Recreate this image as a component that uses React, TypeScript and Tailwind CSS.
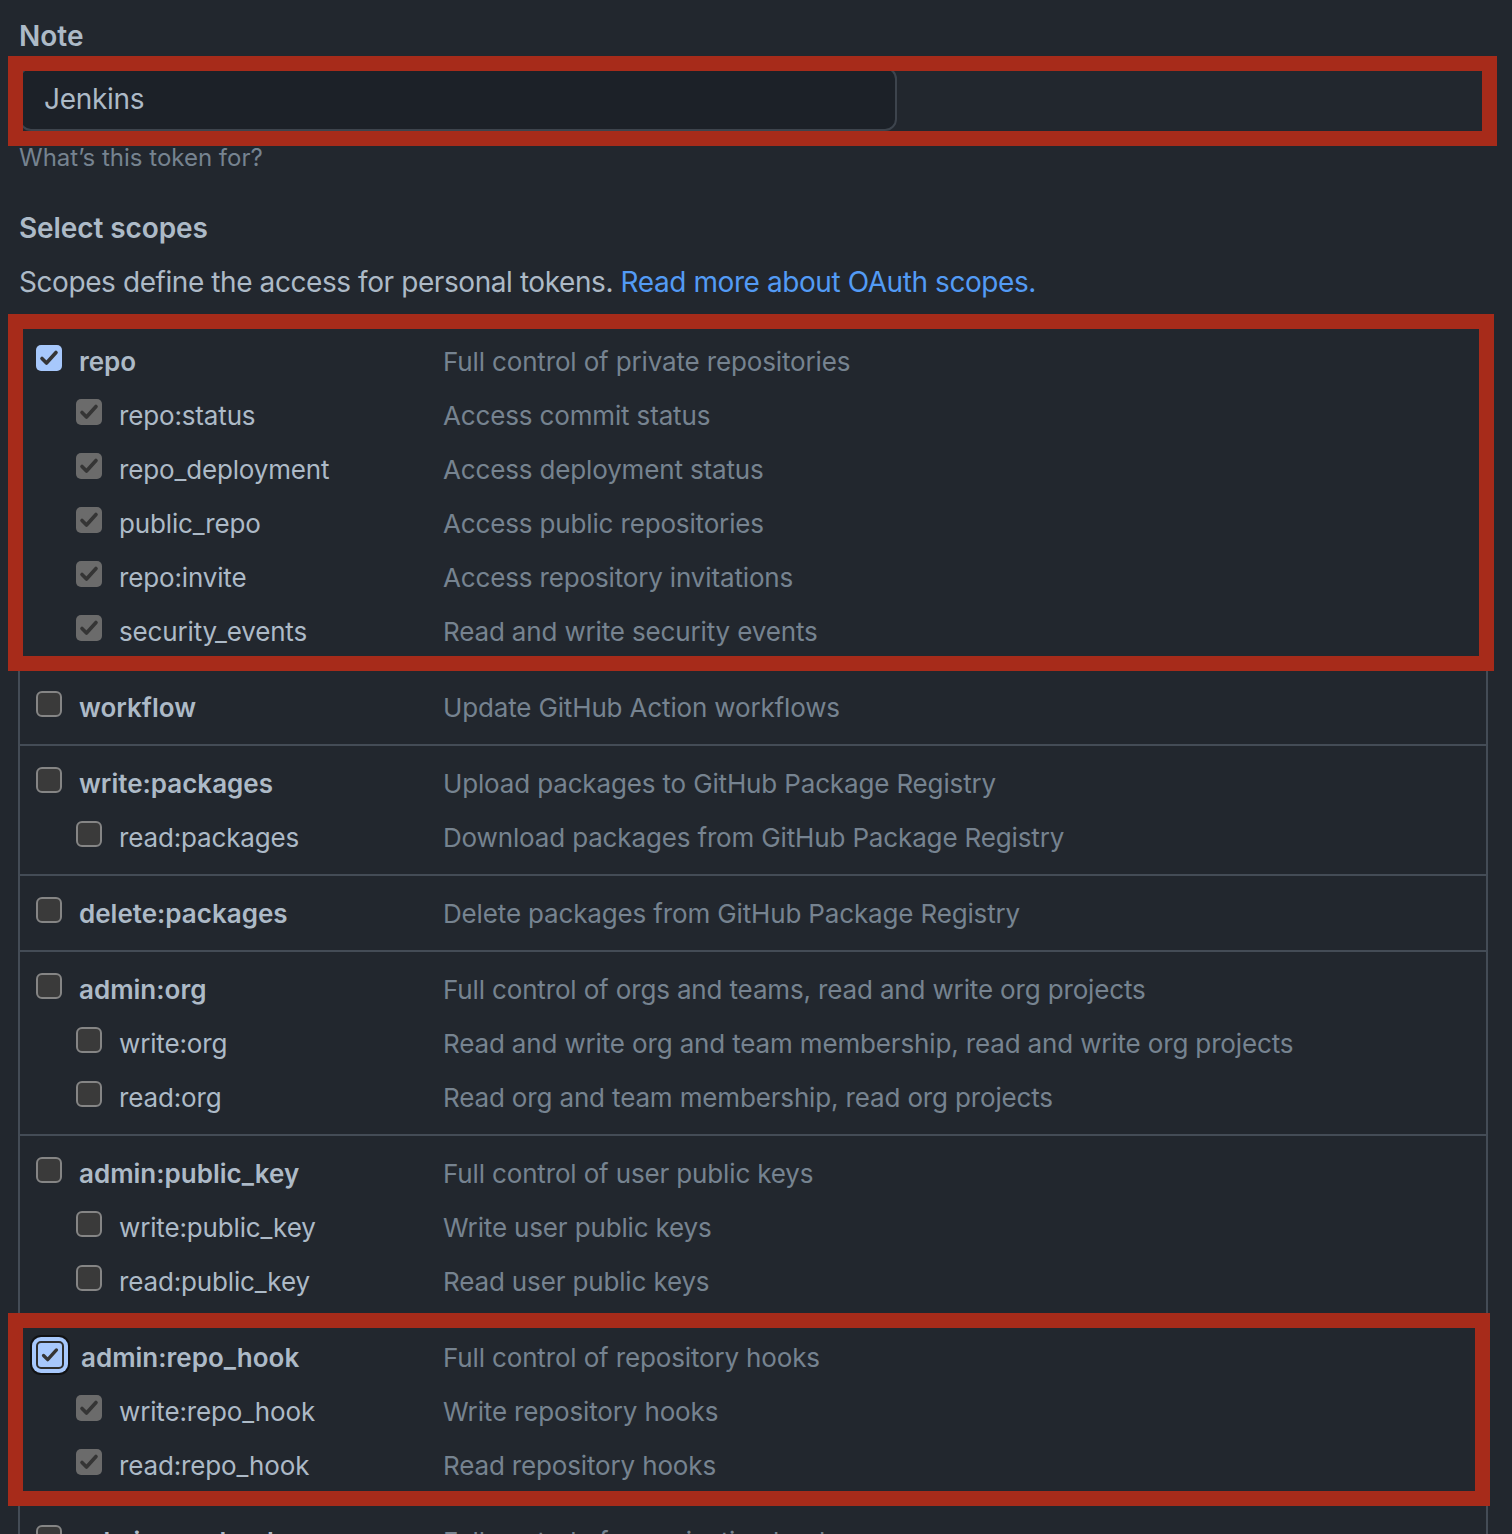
import React from "react";

type Sub = { name: string; desc: string };
type Group = { name: string; desc: string; checked?: boolean; focus?: boolean; subs?: Sub[] };

const groups: Group[] = [
  {
    name: "repo",
    desc: "Full control of private repositories",
    checked: true,
    subs: [
      { name: "repo:status", desc: "Access commit status" },
      { name: "repo_deployment", desc: "Access deployment status" },
      { name: "public_repo", desc: "Access public repositories" },
      { name: "repo:invite", desc: "Access repository invitations" },
      { name: "security_events", desc: "Read and write security events" },
    ],
  },
  { name: "workflow", desc: "Update GitHub Action workflows" },
  {
    name: "write:packages",
    desc: "Upload packages to GitHub Package Registry",
    subs: [{ name: "read:packages", desc: "Download packages from GitHub Package Registry" }],
  },
  { name: "delete:packages", desc: "Delete packages from GitHub Package Registry" },
  {
    name: "admin:org",
    desc: "Full control of orgs and teams, read and write org projects",
    subs: [
      { name: "write:org", desc: "Read and write org and team membership, read and write org projects" },
      { name: "read:org", desc: "Read org and team membership, read org projects" },
    ],
  },
  {
    name: "admin:public_key",
    desc: "Full control of user public keys",
    subs: [
      { name: "write:public_key", desc: "Write user public keys" },
      { name: "read:public_key", desc: "Read user public keys" },
    ],
  },
  {
    name: "admin:repo_hook",
    desc: "Full control of repository hooks",
    checked: true,
    focus: true,
    subs: [
      { name: "write:repo_hook", desc: "Write repository hooks" },
      { name: "read:repo_hook", desc: "Read repository hooks" },
    ],
  },
  { name: "admin:org_hook", desc: "Full control of organization hooks" },
];

function Check() {
  return (
    <svg width="26" height="26" viewBox="0 0 26 26" className="block">
      <path d="M6 13.5 L10.5 18 L20 7.5" fill="none" stroke="#353535" strokeWidth="3.6" strokeLinecap="round" strokeLinejoin="round" />
    </svg>
  );
}

function Box({ kind, focus }: { kind: "on" | "dis" | "off"; focus?: boolean }) {
  if (kind === "on" && focus) {
    return (
      <span className="-mt-[5px] flex h-[28px] w-[28px] shrink-0 items-center justify-center rounded-[5px] border-2 border-[#2e2e2e] bg-[#a7c8fc] shadow-[0_0_0_4px_#a7c8fc,0_0_0_6px_#111214]">
        <Check />
      </span>
    );
  }
  if (kind === "on") {
    return (
      <span className="-mt-[6px] flex h-[26px] w-[26px] shrink-0 items-center justify-center rounded-[5px] bg-[#a7c8fc]">
        <Check />
      </span>
    );
  }
  if (kind === "dis") {
    return (
      <span className="-mt-[6px] flex h-[26px] w-[26px] shrink-0 items-center justify-center rounded-[5px] bg-[#6b6b6b]">
        <Check />
      </span>
    );
  }
  return <span className="-mt-[6px] block h-[26px] w-[26px] shrink-0 rounded-[6px] border-2 border-[#858585] bg-[#3a3a3a]" />;
}

export default function App() {
  return (
    <div
      className="relative h-[1534px] overflow-hidden bg-[#22272e] text-[#adbac7]"
      style={{ fontFamily: "Inter, 'Noto Sans', sans-serif" }}
    >
      <div className="pl-[19px] pr-[24px] pt-[16px]">
        <div className="text-[28px] font-semibold leading-[40px]">Note</div>
        <div className="mt-[11px] flex h-[64px] w-[878px] items-center rounded-[12px] border-2 border-[#3d444d] bg-[#1c2128] px-[23px] text-[28px] tracking-[-0.3px]">
          Jenkins
        </div>
        <div className="mt-[9px] text-[24px] leading-[36px] text-[#768390]">What’s this token for?</div>
        <div className="mt-[32px] text-[28px] font-semibold leading-[40px] tracking-[-0.1px]">Select scopes</div>
        <div className="mt-[14px] text-[28px] leading-[40px] tracking-[-0.42px]">
          Scopes define the access for personal tokens.{" "}
          <span className="text-[#539bf5]">Read more about OAuth scopes.</span>
        </div>

        <div className="mt-[20px] w-[1470px] -ml-[1px] border-x-2 border-[#444c56]">
          {groups.map((g) => (
            <div key={g.name} className="border-t-2 border-[#444c56] py-[10px]">
              <div className="flex h-[54px] items-center pl-[16px] text-[26px] tracking-[-0.15px]">
                <div className="flex w-[407px] items-center gap-[17px]">
                  <Box kind={g.checked ? "on" : "off"} focus={g.focus} />
                  <span className="font-semibold tracking-[0px]">{g.name}</span>
                </div>
                <span className="text-[#768390]">{g.desc}</span>
              </div>
              {(g.subs || []).map((s) => (
                <div key={s.name} className="flex h-[54px] items-center pl-[56px] text-[26px] tracking-[-0.15px]">
                  <div className="flex w-[367px] items-center gap-[17px]">
                    <Box kind={g.checked ? "dis" : "off"} />
                    <span>{s.name}</span>
                  </div>
                  <span className="text-[#768390]">{s.desc}</span>
                </div>
              ))}
            </div>
          ))}
        </div>
      </div>

      {/* annotation overlays */}
      <div className="pointer-events-none absolute left-[8px] top-[56px] h-[90px] w-[1489px] border-[15px] border-[#a72b1a]" />
      <div className="pointer-events-none absolute left-[8px] top-[314px] h-[357px] w-[1486px] border-[15px] border-[#a72b1a]" />
      <div className="pointer-events-none absolute left-[8px] top-[1313px] h-[193px] w-[1482px] border-[15px] border-[#a72b1a]" />
    </div>
  );
}
